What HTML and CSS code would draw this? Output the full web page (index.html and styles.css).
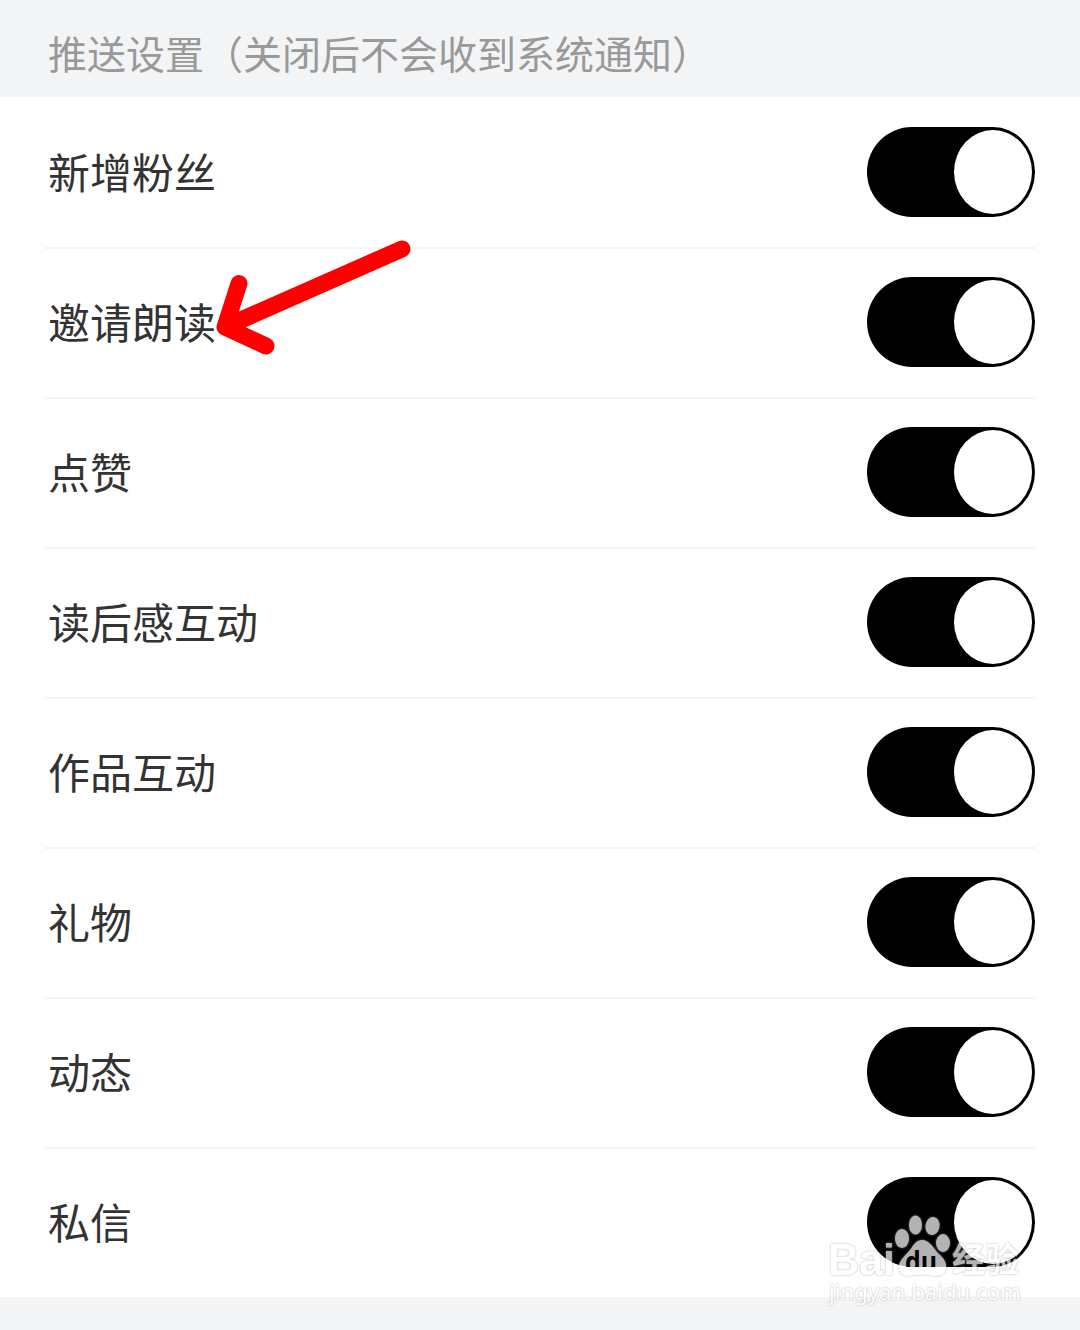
FILE: index.html
```html
<!DOCTYPE html>
<html lang="zh-CN">

<head>
  <meta charset="utf-8" />
  <title>推送设置</title>
  <link rel="stylesheet" href="styles.css">
</head>

<body>
  <h2 class="section-title">推送设置（关闭后不会收到系统通知）</h2>

  <ul class="settings">
    <li class="row"><span class="label">新增粉丝</span><span class="switch"><i class="knob"></i></span></li>
    <li class="row"><span class="label">邀请朗读</span><span class="switch"><i class="knob"></i></span></li>
    <li class="row"><span class="label">点赞</span><span class="switch"><i class="knob"></i></span></li>
    <li class="row"><span class="label">读后感互动</span><span class="switch"><i class="knob"></i></span></li>
    <li class="row"><span class="label">作品互动</span><span class="switch"><i class="knob"></i></span></li>
    <li class="row"><span class="label">礼物</span><span class="switch"><i class="knob"></i></span></li>
    <li class="row"><span class="label">动态</span><span class="switch"><i class="knob"></i></span></li>
    <li class="row"><span class="label">私信</span><span class="switch"><i class="knob"></i></span></li>
  </ul>

  <!-- arrow pointing at the second row -->
  <svg class="arrow" width="220" height="135" viewBox="0 0 220 135">
    <path d="M202 24L25 102M39 58.500L25 102L66 121" />
  </svg>

  <!-- watermark -->
  <svg class="watermark" width="210" height="100" viewBox="0 0 210 100">
    <defs>
      <clipPath id="du-clip">
        <rect x="60" y="20" width="80" height="37" />
      </clipPath>
    </defs>
    <g class="mark">
      <text class="bai" x="8" y="65" textLength="67" lengthAdjust="spacingAndGlyphs">Bai</text>
      <ellipse cx="82" cy="28.500" rx="7" ry="9.500" />
      <ellipse cx="95.500" cy="15" rx="6.500" ry="9.500" />
      <ellipse cx="112.500" cy="16" rx="7" ry="9" transform="rotate(10 112.500 16)" />
      <ellipse cx="123" cy="33" rx="7" ry="9" />
      <path d="M102 30C109 30 113 37 117 42C122 47 127 51 126 58C125 66 117 67 111 65.500C105 64.500 99 64.500 93 65.500C86 67 79 65 79 57C79 50 85 46 90 40C93 36 96 30 102 30Z" />
      <text class="jingyan" x="132" y="62" textLength="67" lengthAdjust="spacingAndGlyphs">经验</text>
      <text class="url" x="9" y="90" textLength="192" lengthAdjust="spacingAndGlyphs">jingyan.baidu.com</text>
    </g>
    <text class="du" x="85" y="62" textLength="32" lengthAdjust="spacingAndGlyphs" clip-path="url(#du-clip)">du</text>
  </svg>
</body>

</html>
```
FILE: styles.css
```css
* {
  box-sizing: border-box;
}

body {
  position: relative;
  height: 1330px;
  margin: 0;
  overflow: hidden;
  background: #f3f4f6;
  color: #333;
  font-family: "Noto Sans CJK SC", sans-serif;
}

.section-title {
  display: flex;
  align-items: center;
  height: 97px;
  margin: 0;
  padding: 6px 48px 0;
  color: #999;
  font-size: 39px;
  font-weight: 400;
}

.settings {
  margin: 0;
  padding: 0 45px;
  background: #fff;
  list-style: none;
}

.row {
  display: flex;
  justify-content: space-between;
  align-items: center;
  height: 150px;
  padding-left: 3px;
  font-size: 42px;
}

.row + .row {
  box-shadow: inset 0 2px #f4f4f4;
}

.label {
  padding-bottom: 4px;
}

.switch {
  display: flex;
  justify-content: flex-end;
  width: 168px;
  height: 90px;
  padding: 3px;
  border-radius: 45px 42px 42px 45px / 45px;
  background: #000;
}

.knob {
  width: 78px;
  height: 84px;
  border-radius: 50%;
  background: #fff;
}

.arrow {
  position: absolute;
  top: 225px;
  left: 200px;
  fill: none;
  stroke: #f00;
  stroke-width: 17;
  stroke-linecap: round;
  stroke-linejoin: round;
}

.watermark {
  position: absolute;
  top: 1210px;
  left: 820px;
}

.mark {
  fill: #fff;
  opacity: 0.7;
  filter: drop-shadow(0 0 1px #999);
}

.bai {
  font-family: "Liberation Sans", sans-serif;
  font-size: 45px;
  font-weight: 700;
}

.du {
  font-family: "Open Sans", sans-serif;
  font-size: 29px;
  font-weight: 700;
  fill: #000;
}

.jingyan {
  font-size: 34px;
  font-weight: 700;
}

.url {
  font-family: "Noto Sans", sans-serif;
  font-size: 22px;
}
```
